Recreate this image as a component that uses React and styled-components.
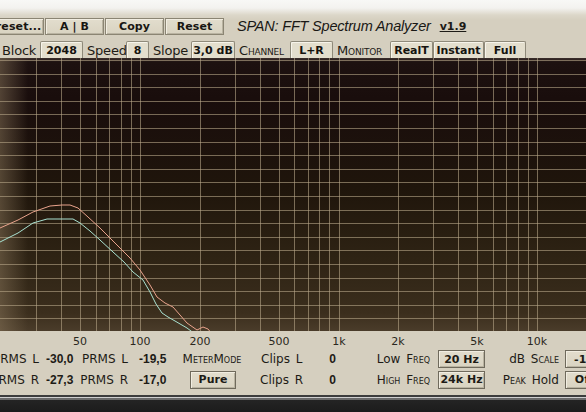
import React from "react";
import styled, { createGlobalStyle, css } from "styled-components";

const GlobalStyle = createGlobalStyle`
  html, body {
    margin: 0;
    padding: 0;
    width: 586px;
    height: 412px;
    overflow: hidden;
    background: #d5cfbf;
  }
  * { box-sizing: border-box; }
`;

const Window = styled.div`
  width: 586px;
  height: 412px;
  display: flex;
  flex-direction: column;
  overflow: hidden;
  font-family: "DejaVu Sans", "Liberation Sans", sans-serif;
  color: #1d1b16;
  background: #d5cfbf;
`;

const TopBar = styled.div`
  height: 38px;
  display: flex;
  align-items: flex-end;
  padding-bottom: 3px;
  background: linear-gradient(#f8f8f6 0px, #f3f2ef 8px, #dcd7c9 15px, #d5cfbf 20px);
`;

const ButtonRow = styled.div`
  display: flex;
  gap: 1px;
  margin-left: -15px;
`;

const bevel = css`
  border: 1px solid #8b8573;
  box-shadow: inset 1px 1px 0 #f1ede1, inset -1px -1px 0 #b9b3a1;
  background: linear-gradient(#e2ddcd, #d9d3c1);
`;

const Button = styled.div`
  ${bevel};
  width: ${(p) => p.$w || 59}px;
  height: 17px;
  display: flex;
  align-items: center;
  justify-content: center;
  font: bold 11px "DejaVu Sans", sans-serif;
  letter-spacing: 0.1px;
  color: #181612;
`;

const Title = styled.div`
  margin-left: 13px;
  font: italic 14.5px "Liberation Sans", sans-serif;
  color: #191815;
  letter-spacing: -0.2px;
  line-height: 17px;
`;

const Version = styled.span`
  margin-left: 9px;
  font: bold 11px "DejaVu Sans", sans-serif;
  text-decoration: underline;
  line-height: 17px;
`;

const TabRow = styled.div`
  height: 20px;
  display: flex;
  align-items: flex-end;
  padding-left: 2px;
`;

const TabLabel = styled.div`
  height: 16px;
  display: flex;
  align-items: center;
  font-size: 13px;
  font-family: "DejaVu Sans", sans-serif;
  letter-spacing: -0.2px;
  font-variant: ${(p) => (p.$caps ? "small-caps" : "normal")};
  color: #1d1b16;
  width: ${(p) => p.$w}px;
  padding-left: ${(p) => p.$pl || 0}px;
`;

const Tab = styled.div`
  height: 17px;
  width: ${(p) => p.$w}px;
  display: flex;
  align-items: center;
  justify-content: center;
  font: bold 11px "DejaVu Sans", sans-serif;
  color: #15130f;
  background: #e3decd;
  border: 1px solid #8f8a7a;
  border-bottom: none;
  box-shadow: inset 1px 1px 0 #f7f4ea;
  border-radius: 2px 2px 0 0;
`;

const GraphWrap = styled.div`
  height: 273px;
  position: relative;
  background: linear-gradient(#3b2f2c 0px, #1d1110 4px, #190d0c 40px, #1f150b 130px, #2e2314 200px, #3b2e1d 255px, #4a3c2a 273px);
  svg { display: block; }
`;

const Scale = styled.div`
  height: 18px;
  position: relative;
  font: 11px "DejaVu Sans", sans-serif;
  color: #2a2720;
`;

const ScaleLabel = styled.span`
  position: absolute;
  top: 4px;
  transform: translateX(-50%);
`;

const Meters = styled.div`
  margin-left: -12px;
  display: grid;
  grid-template-columns: 54px 38px 52px 40px 80px 53px 55px 74px 56px 73px 40px;
  grid-template-rows: 20px 21px;
  align-items: center;
  font-size: 12px;
  font-family: "DejaVu Sans", sans-serif;
`;

const Label = styled.div`
  white-space: nowrap;
  text-align: ${(p) => p.$align || "right"};
  padding-left: ${(p) => p.$pl || 0}px;
  padding-right: ${(p) => p.$pr || 0}px;
  font-variant: ${(p) => (p.$caps ? "small-caps" : "normal")};
  word-spacing: 2px;
`;

const Caps = styled.span`
  font-variant: small-caps;
`;

const Value = styled.div`
  font: bold 12px "Liberation Sans", sans-serif;
  text-align: ${(p) => p.$align || "left"};
  padding-left: ${(p) => p.$pl || 0}px;
`;

const MeterButton = styled.div`
  ${bevel};
  height: 18px;
  margin: 0 ${(p) => p.$mr || 0}px 0 ${(p) => p.$ml || 0}px;
  display: flex;
  align-items: center;
  justify-content: center;
  font: bold 11px "DejaVu Sans", sans-serif;
  border-color: #6f6a5c;
`;

const Filler = styled.div`
  flex: 1;
`;

const BottomBar = styled.div`
  height: 17px;
  background: linear-gradient(#3c3c3c 0px, #3c3c3c 2px, #cfcfcf 2px, #cfcfcf 3px, #6a6a6a 3px, #6a6a6a 5px, #242424 5px, #1c1c1c 17px);
`;

const fx = (f) => 140 + 198.5 * Math.log10(f / 100);

const freqLines = [30, 40, 50, 60, 70, 80, 90, 100, 200, 300, 400, 500, 600, 700, 800, 900, 1000, 2000, 3000, 4000, 5000, 6000, 7000, 8000, 9000, 10000, 20000];

const scaleLabels = [
  [50, "50"],
  [100, "100"],
  [200, "200"],
  [500, "500"],
  [1000, "1k"],
  [2000, "2k"],
  [5000, "5k"],
  [10000, "10k"],
];

// curve points, absolute page coords (y offset 58 removed below)
const orange = [[0, 228], [18, 220], [33, 212], [50, 206], [62, 205], [70, 205], [78, 208], [88, 217], [100, 228], [117, 245], [130, 258], [140, 270], [150, 285], [157, 297], [165, 303], [173, 307], [180, 315], [187, 323], [197, 330], [203, 327], [208, 329], [212, 334]];
const cyan = [[0, 242], [18, 233], [33, 223], [47, 219], [60, 219], [73, 219], [80, 223], [90, 231], [100, 240], [113, 252], [124, 262], [133, 272], [143, 280], [150, 292], [156, 304], [162, 313], [168, 317], [175, 321], [187, 328], [195, 334]];

const toPath = (pts) => pts.map(([x, y], i) => `${i ? "L" : "M"}${x} ${y - 58}`).join(" ");

const Spectrum = () => {
  const hLines = [];
  for (let k = -1; k <= 18; k++) hLines.push(15.5 + 13.6 * k);
  return (
    <svg width="586" height="273" viewBox="0 0 586 273">
      <defs>
        <linearGradient id="edge" x1="0" x2="1" y1="0" y2="0">
          <stop offset="0" stopColor="#8a775c" stopOpacity="0.5" />
          <stop offset="1" stopColor="#8a775c" stopOpacity="0" />
        </linearGradient>
      </defs>
      <rect x="0" y="0" width="28" height="273" fill="url(#edge)" />
      <g stroke="#b8a789" strokeOpacity="0.6" strokeWidth="1">
        {freqLines.map((f) => {
          const x = Math.round(fx(f)) + 0.5;
          return <line key={f} x1={x} x2={x} y1="0" y2="273" />;
        })}
        {hLines.map((y, i) => (
          <line key={i} x1="0" x2="586" y1={Math.round(y) + 0.5} y2={Math.round(y) + 0.5} />
        ))}
      </g>
      <path d={toPath(orange)} fill="none" stroke="#e9a38c" strokeWidth="1" />
      <path d={toPath(cyan)} fill="none" stroke="#a9e2d2" strokeWidth="1" />
    </svg>
  );
};

export default function App() {
  return (
    <>
      <GlobalStyle />
      <Window>
        <TopBar>
          <ButtonRow>
            <Button>Preset...</Button>
            <Button>A | B</Button>
            <Button>Copy</Button>
            <Button>Reset</Button>
          </ButtonRow>
          <Title>SPAN: FFT Spectrum Analyzer</Title>
          <Version>v1.9</Version>
        </TopBar>

        <TabRow>
          <TabLabel $w={38}>Block</TabLabel>
          <Tab $w={43}>2048</Tab>
          <TabLabel $w={43} $pl={4}>Speed</TabLabel>
          <Tab $w={23}>8</Tab>
          <TabLabel $w={42} $pl={4}>Slope</TabLabel>
          <Tab $w={44}>3,0 dB</Tab>
          <TabLabel $w={55} $pl={4} $caps>Channel</TabLabel>
          <Tab $w={43}>L+R</Tab>
          <TabLabel $w={57} $pl={4} $caps>Monitor</TabLabel>
          <Tab $w={43}>RealT</Tab>
          <Tab $w={51}>Instant</Tab>
          <Tab $w={42}>Full</Tab>
        </TabRow>

        <GraphWrap>
          <Spectrum />
        </GraphWrap>

        <Scale>
          {scaleLabels.map(([f, t]) => (
            <ScaleLabel key={t} style={{ left: Math.round(fx(f)) }}>{t}</ScaleLabel>
          ))}
        </Scale>

        <Meters>
          <Label $pr={3}>PRMS L</Label>
          <Value $pl={4}>-30,0</Value>
          <Label $pr={4}>PRMS L</Label>
          <Value $pl={7}>-19,5</Value>
          <Label $align="center" $caps>MeterMode</Label>
          <Label $align="left" $pl={9}>Clips L</Label>
          <Value $align="center">0</Value>
          <Label $pr={4}>Low <Caps>Freq</Caps></Label>
          <MeterButton $ml={4} $mr={5}>20 Hz</MeterButton>
          <Label $pr={4}>dB <Caps>Scale</Caps></Label>
          <MeterButton $ml={2}>-10</MeterButton>

          <Label $pr={3}>PRMS R</Label>
          <Value $pl={4}>-27,3</Value>
          <Label $pr={4}>PRMS R</Label>
          <Value $pl={7}>-17,0</Value>
          <MeterButton $ml={18} $mr={16}>Pure</MeterButton>
          <Label $align="left" $pl={8}>Clips R</Label>
          <Value $align="center">0</Value>
          <Label $pr={4} $caps>High Freq</Label>
          <MeterButton $ml={4} $mr={5}>24k Hz</MeterButton>
          <Label $pr={4}><Caps>Peak</Caps> Hold</Label>
          <MeterButton $ml={2}>Off</MeterButton>
        </Meters>

        <Filler />
        <BottomBar />
      </Window>
    </>
  );
}
